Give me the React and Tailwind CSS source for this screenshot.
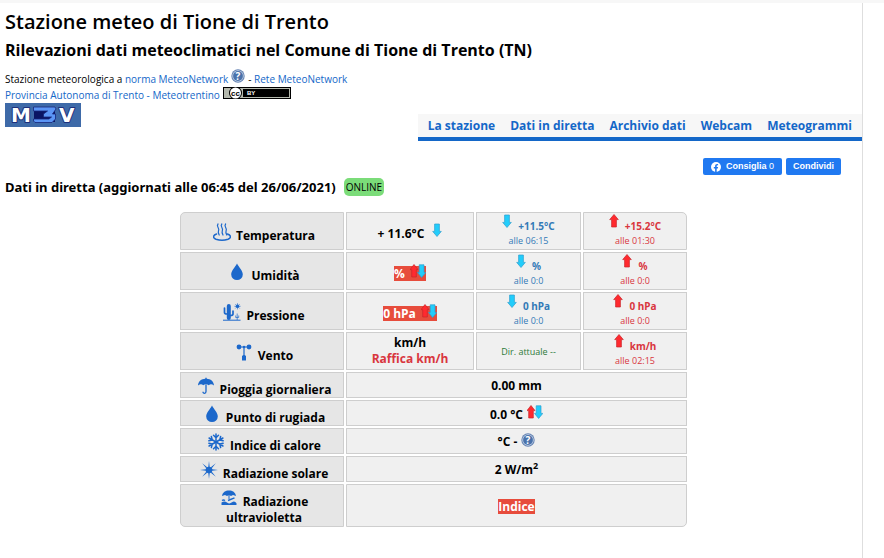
import clsx from 'clsx';

const NAV_LINKS = [
  'La stazione',
  'Dati in diretta',
  'Archivio dati',
  'Webcam',
  'Meteogrammi',
];

const LABEL_CELL = 'border border-[#cecece] bg-[#e6e6e6] p-0 pt-1 pl-1';
const DATA_CELL = 'border border-[#cecece] bg-[#f0f0f0] p-0';

const ArrowUp = () => (
  <svg viewBox="0 0 10 14" className="h-3.5 w-2.5 shrink-0">
    <path
      d="M5 .5 9.3 5.6H7.4V13H2.6V5.6H.7Z"
      fill="#ff2a2f"
      stroke="#c9252b"
      strokeWidth=".7"
    />
  </svg>
);

const ArrowDown = () => (
  <svg viewBox="0 0 10 14" className="h-3.5 w-2.5 shrink-0">
    <path
      d="M5 13.5 9.3 8.4H7.4V1H2.6V8.4H.7Z"
      fill="#22cdfb"
      stroke="#2c9fd0"
      strokeWidth=".7"
    />
  </svg>
);

const ArrowPair = ({ className }) => (
  <svg viewBox="0 0 16 14" className={clsx('h-3.5 w-4 shrink-0', className)}>
    <path
      d="M4 .5 8 5.6H6.3V13H1.7V5.6H0Z"
      fill="#ff2a2f"
      stroke="#c9252b"
      strokeWidth=".7"
    />
    <path
      d="M11.6 13.5 15.8 8.4H14V.8H9.2V8.4H7.5Z"
      fill="#22cdfb"
      stroke="#2c9fd0"
      strokeWidth=".7"
    />
  </svg>
);

const HelpIcon = ({ className }) => (
  <svg viewBox="0 0 14 14" className={clsx('size-3.5 shrink-0', className)}>
    <circle cx="7" cy="7" r="6.7" fill="#6483b3" />
    <circle cx="7" cy="7" r="5.7" fill="#c9d6e8" />
    <circle cx="7" cy="7" r="4.9" fill="#4a72ab" />
    <text
      x="7"
      y="10.6"
      textAnchor="middle"
      fontSize="10"
      fontWeight="700"
      fill="#fff"
      fontFamily="Open Sans, sans-serif"
    >
      ?
    </text>
  </svg>
);

const MgvLogo = () => (
  <svg viewBox="0 0 76 24" className="h-6 w-[76px] shrink-0">
    <rect width="76" height="24" fill="#3e6aa8" />
    <g
      fontFamily="DejaVu Sans, sans-serif"
      fontWeight="700"
      fontSize="20"
      fill="#fff"
      stroke="#1d2f7c"
      strokeWidth="2"
      strokeLinejoin="round"
      paintOrder="stroke"
    >
      <text x="6" y="19">
        M
      </text>
      <text x="54" y="19">
        V
      </text>
    </g>
    <path d="M29 4H50V19H29Z" fill="#0a1564" />
    <path
      d="M28.500 4H50L51 6 47.500 11H50.500V16L47 19.500H30L28.500 18V16H44L46.500 14H38.500V11L42.500 8H28.500Z"
      fill="#5b95f5"
      stroke="#16267a"
      strokeWidth=".8"
    />
  </svg>
);

const CcBadge = () => (
  <svg viewBox="0 0 68 12" className="h-3 w-[68px] shrink-0">
    <rect width="68" height="12" fill="#000" />
    <rect x="1" y="1" width="66" height="10" fill="#b5b9ae" />
    <rect x="20" y="2" width="46" height="8" fill="#000" />
    <circle cx="12.500" cy="6" r="6.500" fill="#000" />
    <circle cx="12.500" cy="6" r="5.500" fill="#fff" />
    <g fontFamily="Liberation Sans, sans-serif" fontWeight="700">
      <text x="12.500" y="8.500" textAnchor="middle" fontSize="8">
        cc
      </text>
      <text x="24" y="8" fontSize="6" fill="#fff">
        BY
      </text>
    </g>
  </svg>
);

const IconBox = ({ children }) => (
  <svg
    viewBox="0 0 18 18"
    className="mb-0.5 size-[18px] shrink-0"
    fill="#1c68cb"
    stroke="#1c68cb"
    strokeWidth="0"
  >
    {children}
  </svg>
);

const HotSpringIcon = () => (
  <IconBox>
    <g fill="none" strokeWidth="1.2" strokeLinecap="round">
      <path d="M5 1c-2.200 2.500 1.800 4 .6 6.500-.4 1-.9 1.500.6 4.500" />
      <path d="M8.800 1c-2.200 2.500 1.800 4 .6 6.500-.4 1-.9 1.500.6 4.500" />
      <path d="M12.600 1c-2.200 2.500 1.800 4 .6 6.500-.4 1-.9 1.500.6 4.500" />
      <path
        d="M3.500 11C-.5 12.300-.2 15 3 16.200c3.500 1.200 8.500 1.200 12 0 3.200-1.200 3.500-3.900-.5-5.200"
        strokeWidth="1.500"
      />
    </g>
  </IconBox>
);

const DropIcon = () => (
  <IconBox>
    <path d="M9 .5C11 4.500 14.800 7.500 14.800 11.500a5.800 5.500 0 0 1-11.600 0C3.200 7.500 7 4.500 9 .5Z" />
  </IconBox>
);

const DesertIcon = () => (
  <IconBox>
    <rect x="3.800" y="1" width="4" height="16" rx="2" />
    <path
      d="M1.500 5v4.500q0 1.500 2.500 1.500M10 8v3q0 1.500-2.500 1.500"
      fill="none"
      strokeWidth="1.700"
      strokeLinecap="round"
    />
    <path d="M0 17.200H17.500" strokeWidth="1" />
    <circle cx="14.500" cy="3.300" r="1.700" />
    <path
      d="M14.500.2v6.200M11.400 3.300h6.200M12.300 1.100l4.400 4.400M16.700 1.100l-4.400 4.400"
      strokeWidth=".6"
    />
    <path d="M14.200 17V10.500M12.700 12.500v2h3v-2" fill="none" strokeWidth=".7" />
  </IconBox>
);

const AnemometerIcon = () => (
  <IconBox>
    <circle cx="4" cy="4" r="2.400" />
    <circle cx="14" cy="4" r="2.400" />
    <path d="M4 4H14M9 4V13" strokeWidth="1.200" />
    <path d="M7 17.500V13q2-2 4 0v4.500Z" />
    <circle cx="9" cy="4" r="1.300" />
  </IconBox>
);

const UmbrellaIcon = () => (
  <IconBox>
    <path d="M1 8.500C1.200 4.300 4.500 2 8.300 1.800V.8h1.400v1C13.500 2 16.800 4.300 17 8.500 15 6.900 13 6.900 11.800 8.300 10 7 8 7 6.200 8.300 5 6.900 3 6.900 1 8.500Z" />
    <path
      d="M9 7.500V14.500Q9 16.300 7.500 16.300T6 14.700"
      fill="none"
      strokeWidth="1.300"
    />
  </IconBox>
);

const SnowflakeIcon = () => (
  <IconBox>
    <g fill="none" strokeWidth="1.500" strokeLinecap="round">
      <path d="M9 1V17M6.500 2.200 9 4.700l2.500-2.500M6.500 15.800 9 13.300l2.500 2.500" />
      <path
        d="M9 1V17M6.500 2.200 9 4.700l2.500-2.500M6.500 15.800 9 13.300l2.500 2.500"
        transform="rotate(60 9 9)"
      />
      <path
        d="M9 1V17M6.500 2.200 9 4.700l2.500-2.500M6.500 15.800 9 13.300l2.500 2.500"
        transform="rotate(120 9 9)"
      />
    </g>
  </IconBox>
);

const SunIcon = () => (
  <IconBox>
    <circle cx="9" cy="9" r="3.300" />
    <path d="M9 0 9.700 6H8.300ZM9 18 8.300 12h1.400ZM0 9l6-.7v1.400ZM18 9l-6 .7V8.300ZM2.200 2.200l5 4-1 1ZM15.800 2.200l-4 5-1-1ZM2.200 15.800l4-5 1 1ZM15.800 15.800l-5-4 1-1Z" />
  </IconBox>
);

const BeachIcon = () => (
  <IconBox>
    <path d="M2 7C2.500 3.300 5.500 1.500 9 1.500S15.500 3.300 16 7L13 6 11 7 9 6 7 7 5 6Z" />
    <path d="M9 6v4" strokeWidth="1" />
    <path
      d="M8 11.500 14.500 8.800M2 11.500q1.500-1 3 0"
      fill="none"
      strokeWidth="1.400"
    />
    <path d="M1.500 13.500q3-2 5.500 0t5-.2 4.500 1V16H1.500Z" />
  </IconBox>
);

const Alert = ({ children }) => (
  <span className="inline-flex h-[15px] gap-[5px] bg-[#e74c3c] align-middle text-white">
    {children}
  </span>
);

const Label = ({ icon: Icon, text, extra }) => (
  <th scope="row" className={LABEL_CELL}>
    <div className="flex h-5 items-end justify-center gap-[5px]">
      <Icon />
      <span className="leading-[14px]">{text}</span>
    </div>
    {extra && <div className="leading-[17px]">{extra}</div>}
  </th>
);

const Extreme = ({ type, value, time }) => (
  <td
    className={clsx(
      DATA_CELL,
      type === 'min' ? 'text-[#337ab7]' : 'text-[#d9363e]',
    )}
  >
    <div className="flex h-[19px] justify-center gap-1.5">
      {type === 'min' ? <ArrowDown /> : <ArrowUp />}
      <b className="self-end font-['Noto_Sans',sans-serif] text-[10px] leading-[14px]">
        {value}
      </b>
    </div>
    <div className="text-[9px] leading-4">{time}</div>
  </td>
);

const WideRow = ({ label, icon, extra, children }) => (
  <tr className={extra ? 'h-[43px]' : 'h-[26px]'}>
    <Label icon={icon} text={label} extra={extra} />
    <td colSpan={3} className={clsx(DATA_CELL, 'font-bold')}>
      {children}
    </td>
  </tr>
);

const Header = () => (
  <header>
    <h1 className="px-[5px] pt-1.5 text-[20px] leading-[26px] font-semibold">
      Stazione meteo di Tione di Trento
    </h1>
    <h2 className="px-[5px] pt-1 text-[16px] leading-[22px] font-bold">
      Rilevazioni dati meteoclimatici nel Comune di Tione di Trento (TN)
    </h2>
    <div className="px-[5px] pt-2.5 text-[10px] leading-4">
      <p className="flex h-4 gap-[3px]">
        <span>
          Stazione meteorologica a{' '}
          <a href="#norma" className="text-[#1467c8]">
            norma MeteoNetwork
          </a>
        </span>
        <HelpIcon className="-mt-0.5" />
        <span>
          -{' '}
          <a href="#rete" className="text-[#1467c8]">
            Rete MeteoNetwork
          </a>
        </span>
      </p>
      <p className="flex h-4 gap-[3px]">
        <a href="#meteotrentino" className="text-[#1467c8]">
          Provincia Autonoma di Trento - Meteotrentino
        </a>
        <CcBadge />
      </p>
    </div>
    <div className="flex items-start justify-between pl-[5px]">
      <MgvLogo />
      <nav className="mt-[11px] flex gap-[15px] border-b-4 border-[#1467c8] bg-[#f7f7f7] px-2.5 text-[12px] leading-[23px] font-bold text-[#1467c8]">
        {NAV_LINKS.map((link) => (
          <a key={link} href="#nav">
            {link}
          </a>
        ))}
      </nav>
    </div>
  </header>
);

const SocialButtons = () => (
  <div className="mr-[21px] flex justify-end gap-1 pt-[17px] font-['Liberation_Sans',sans-serif] text-[9px] leading-[17px] font-bold text-white">
    <button
      type="button"
      className="flex h-[17px] items-center gap-[5px] rounded-[2px] bg-[#2079f1] px-2"
    >
      <svg viewBox="0 0 10 10" className="size-2.5">
        <circle cx="5" cy="5" r="5" fill="#fff" />
        <path
          d="M4.100 10V6.500H2.800V5h1.300V3.900C4.100 2.600 4.900 1.900 6.100 1.900l1 .1v1.200H6.500c-.6 0-.8.4-.8.8v1h1.400l-.3 1.500H5.700V10Z"
          fill="#2079f1"
        />
      </svg>
      <span>
        Consiglia <span className="font-normal">0</span>
      </span>
    </button>
    <button
      type="button"
      className="h-[17px] rounded-[2px] bg-[#2079f1] px-[7px]"
    >
      Condividi
    </button>
  </div>
);

const LiveTable = () => (
  <table className="mx-auto w-[511px] table-fixed border-separate border-spacing-x-[2px] border-spacing-y-[2px] text-center text-[12px] leading-[15px]">
    <colgroup>
      <col className="w-[164px]" />
      <col className="w-[128px]" />
      <col className="w-[105px]" />
      <col />
    </colgroup>
    <tbody className="[&>tr:first-child>:first-child]:rounded-tl-[5px] [&>tr:first-child>:last-child]:rounded-tr-[5px] [&>tr:last-child>:first-child]:rounded-bl-[5px] [&>tr:last-child>:last-child]:rounded-br-[5px]">
      <tr className="h-[38px]">
        <Label icon={HotSpringIcon} text="Temperatura" />
        <td className={clsx(DATA_CELL, 'pt-px font-bold')}>
          <div className="flex h-[18px] justify-center gap-2">
            <span className="self-end">+ 11.6°C</span>
            <ArrowDown />
          </div>
        </td>
        <Extreme type="min" value="+11.5°C" time="alle 06:15" />
        <Extreme type="max" value="+15.2°C" time="alle 01:30" />
      </tr>
      <tr className="h-[38px]">
        <Label icon={DropIcon} text="Umidità" />
        <td className={clsx(DATA_CELL, 'pt-1 font-bold')}>
          <Alert>
            % <ArrowPair className="-mt-0.5" />
          </Alert>
        </td>
        <Extreme type="min" value="%" time="alle 0:0" />
        <Extreme type="max" value="%" time="alle 0:0" />
      </tr>
      <tr className="h-[38px]">
        <Label icon={DesertIcon} text="Pressione" />
        <td className={clsx(DATA_CELL, 'pt-1 font-bold')}>
          <Alert>
            0 hPa <ArrowPair className="-mt-0.5" />
          </Alert>
        </td>
        <Extreme type="min" value="0 hPa" time="alle 0:0" />
        <Extreme type="max" value="0 hPa" time="alle 0:0" />
      </tr>
      <tr className="h-[38px]">
        <Label icon={AnemometerIcon} text="Vento" />
        <td className={clsx(DATA_CELL, 'leading-4 font-bold')}>
          <div>km/h</div>
          <div className="text-[#d9363e]">Raffica km/h</div>
        </td>
        <td className={clsx(DATA_CELL, 'text-[9px] text-[#2d7a38]')}>
          Dir. attuale --
        </td>
        <Extreme type="max" value="km/h" time="alle 02:15" />
      </tr>
      <WideRow icon={UmbrellaIcon} label="Pioggia giornaliera">
        0.00 mm
      </WideRow>
      <WideRow icon={DropIcon} label="Punto di rugiada">
        <div className="flex h-[18px] justify-center gap-1 pt-px">
          <span className="self-end">0.0 °C</span>
          <ArrowPair />
        </div>
      </WideRow>
      <WideRow icon={SnowflakeIcon} label="Indice di calore">
        <div className="flex h-4 justify-center gap-1">
          <span className="self-end">°C -</span>
          <HelpIcon />
        </div>
      </WideRow>
      <WideRow icon={SunIcon} label="Radiazione solare">
        2 W/m<sup className="text-[9px]">2</sup>
      </WideRow>
      <WideRow icon={BeachIcon} label="Radiazione" extra="ultravioletta">
        <Alert>Indice</Alert>
      </WideRow>
    </tbody>
  </table>
);

const App = () => {
  return (
    <div className="min-h-screen border-t-[3px] border-[#f7f7f7] bg-white font-['Open_Sans','Noto_Sans',sans-serif] text-black">
      <main className="mr-[21px] min-h-[calc(100vh-3px)] border-r border-[#dedede]">
        <Header />
        <SocialButtons />
        <div className="flex items-center gap-2 px-[5px] pt-[3px]">
          <h3 className="font-['Noto_Sans',sans-serif] text-[13px] leading-[18px] font-bold">
            Dati in diretta (aggiornati alle 06:45 del 26/06/2021)
          </h3>
          <span className="rounded-[5px] bg-[#7bdc79] px-0.5 text-[10px] leading-[18px]">
            ONLINE
          </span>
        </div>
        <div className="pt-3.5 pl-[5px]">
          <LiveTable />
        </div>
      </main>
    </div>
  );
};

export default App;
